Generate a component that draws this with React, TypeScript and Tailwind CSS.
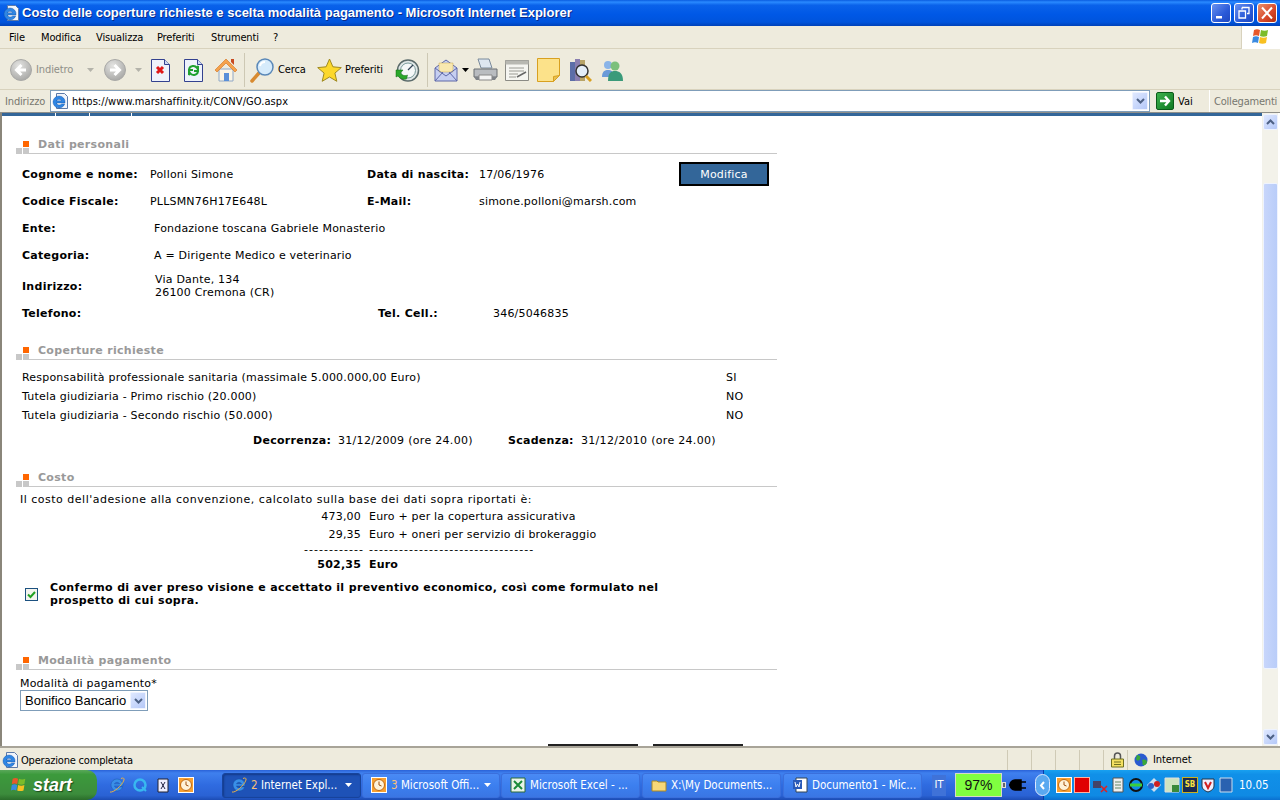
import React from "react";

const V = "[font-family:'DejaVu_Sans',Verdana,sans-serif]";
const T = "[font-family:'DejaVu_Sans_Condensed','Liberation_Sans',sans-serif]";

const E_PATH = "M8 2a6 6 0 1 0 5.700 7.900h-3.100a3 3 0 0 1-5.200-1h8.600A6 6 0 0 0 8 2zM5.400 6.800a3 3 0 0 1 5.200 0z";

function IE({ s = 16 }: { s?: number }) {
  return (
    <svg width={s} height={s} viewBox="0 0 16 16" className="shrink-0">
      <path d={E_PATH} fill="#3a8fe8" stroke="#154f9f" strokeWidth=".4" fillRule="evenodd" />
      <path d="M1 15C4 16 13 9 15 3c.5-2-1-2.500-3-1.500" fill="none" stroke="#e8b048" strokeWidth="1" />
    </svg>
  );
}
function IEPage() {
  return (
    <svg width="16" height="16" viewBox="0 0 16 16" className="shrink-0">
      <path d="M4.500.5h8l3 3v12h-11z" fill="#f2f5fb" stroke="#5d7aa8" />
      <g transform="translate(-1 1)">
        <path d={E_PATH} fill="#2f86e4" stroke="#154f9f" strokeWidth=".4" fillRule="evenodd" />
      </g>
    </svg>
  );
}
function Circle({ d = "M16 11H7m4.500-5-5 5 5 5" }: { d?: string }) {
  return (
    <svg width="22" height="22" viewBox="0 0 22 22" className="shrink-0">
      <defs>
        <radialGradient id="gc" cx=".4" cy=".3" r=".8">
          <stop offset="0" stopColor="#e4e4e2" />
          <stop offset="1" stopColor="#a2a2a0" />
        </radialGradient>
      </defs>
      <circle cx="11" cy="11" r="10.500" fill="url(#gc)" stroke="#a8a8a6" />
      <path d={d} fill="none" stroke="#fff" strokeWidth="3" />
    </svg>
  );
}
function SmallArrow({ c = "#b4b3aa" }: { c?: string }) {
  return (
    <svg width="7" height="4" viewBox="0 0 7 4" className="shrink-0">
      <path d="M0 0h7L3.500 4z" fill={c} />
    </svg>
  );
}
function Doc({ children }: { children: React.ReactNode }) {
  return (
    <svg width="19" height="23" viewBox="0 0 19 23" className="shrink-0">
      <path d="M.5.5h13l5 5v17H.500z" fill="#eef2fb" stroke="#33418f" />
      <path d="M13.500.5v5h5" fill="#cfd9f2" stroke="#33418f" />
      {children}
    </svg>
  );
}
function Home() {
  return (
    <svg width="24" height="24" viewBox="0 0 24 24" className="shrink-0">
      <path d="M5 11h14v12H5z" fill="#fbf4e4" stroke="#8fa8c8" />
      <path d="M10 15h5v8h-5z" fill="#5a8fd8" />
      <path d="M1 12 12 1l11 11-2 2L12 5 3 14z" fill="#f6a24a" stroke="#d0701e" strokeWidth=".6" />
      <path d="M17 1h3v6l-3-3z" fill="#c84a20" />
    </svg>
  );
}
function Search() {
  return (
    <svg width="25" height="25" viewBox="0 0 25 25" className="shrink-0">
      <path d="M2 23 9 15" stroke="#d88a30" strokeWidth="3.500" strokeLinecap="round" />
      <circle cx="15" cy="9" r="8" fill="#d6ebfb" stroke="#5a88b8" strokeWidth="1.500" />
      <path d="M10 8a5 5 0 0 1 5-4" stroke="#fff" strokeWidth="2" fill="none" />
    </svg>
  );
}
function Star() {
  return (
    <svg width="25" height="25" viewBox="0 0 25 25" className="shrink-0">
      <path d="m12.500 1 3.400 7.800 8.400.8-6.400 5.500 1.900 8.200-7.300-4.300-7.300 4.300 1.900-8.200L.7 9.600l8.400-.8z" fill="#fcd82c" stroke="#a08a20" />
    </svg>
  );
}
function History() {
  return (
    <svg width="25" height="25" viewBox="0 0 25 25" className="shrink-0">
      <circle cx="13" cy="12.500" r="10.500" fill="#dfe6e6" stroke="#5a6a6a" strokeWidth="1.500" />
      <circle cx="13" cy="12.500" r="7.500" fill="#f5f8f8" stroke="#7a9a9a" />
      <path d="M13 12 18 7" stroke="#345" strokeWidth="1.200" />
      <path d="M1 12h7l-2.500 3c2 3 5 3 7 2l-1 4c-4 1-7-1-8.500-3L1 19z" fill="#2aa82a" stroke="#126a12" strokeWidth=".5" />
    </svg>
  );
}
function Mail() {
  return (
    <svg width="24" height="24" viewBox="0 0 24 24" className="shrink-0">
      <path d="M1 10 12 2l11 8v13H1z" fill="#c6cff2" stroke="#5e68a8" />
      <path d="M5 5h14v9H5z" fill="#f8e8b0" stroke="#c8a850" strokeWidth=".5" />
      <path d="M1 10l11 8 11-8M1 23l8-9M23 23l-8-9" fill="none" stroke="#5e68a8" />
    </svg>
  );
}
function Printer() {
  return (
    <svg width="25" height="24" viewBox="0 0 25 24" className="shrink-0">
      <path d="M5 1h11l3 9H8z" fill="#dde6f0" stroke="#7a8a9a" />
      <path d="M1 11h23v8H1z" fill="#b9bcc0" stroke="#6a6e72" />
      <path d="M1 19h23l-2 3H3z" fill="#7f8388" />
      <path d="M6 17h13v5H6z" fill="#f4f4f4" stroke="#888" />
    </svg>
  );
}
function Edit() {
  return (
    <svg width="24" height="21" viewBox="0 0 24 21" className="shrink-0">
      <path d="M.5.5h23v20H.5z" fill="#f5f5f1" stroke="#8b8b85" />
      <path d="M.5.5h23v4H.5z" fill="#b8b8b2" />
      <path d="M4 8h15M4 11h15M4 14h9M4 17h7" stroke="#9a9a94" />
      <path d="m12 17 9-5" stroke="#666" strokeWidth="1.500" />
    </svg>
  );
}
function Note() {
  return (
    <svg width="23" height="24" viewBox="0 0 23 24" className="shrink-0">
      <path d="M.5.5h22v17l-6 6H.5z" fill="#fce28a" stroke="#d8a020" />
      <path d="m22.500 17.500-6 1v5z" fill="#e8c050" stroke="#d8a020" />
    </svg>
  );
}
function Research() {
  return (
    <svg width="23" height="24" viewBox="0 0 23 24" className="shrink-0">
      <path d="M1 4h5v19H1z" fill="#5c6ea8" />
      <path d="M6 1h5v22H6z" fill="#8a7fb0" />
      <path d="M11 2h5v21h-5z" fill="#b8a468" />
      <circle cx="13" cy="13" r="6" fill="#e4eef8" stroke="#333" strokeWidth="1.500" />
      <path d="m17 18 5 5" stroke="#d8a020" strokeWidth="3" />
    </svg>
  );
}
function Messenger({ s = 24 }: { s?: number }) {
  return (
    <svg width={s} height={s} viewBox="0 0 24 24" className="shrink-0">
      <circle cx="8" cy="7" r="4" fill="#8ab4e8" />
      <path d="M2 19c0-6 3-7 6-7s6 1 6 7z" fill="#6a9ad8" />
      <circle cx="15" cy="8" r="4.500" fill="#7cc07c" />
      <path d="M8 23c0-8 3-10 7-10s8 2 8 10z" fill="#3a9a7a" />
    </svg>
  );
}
function Flag({ s = 20 }: { s?: number }) {
  return (
    <svg width={s} height={s} viewBox="0 0 20 20" className="shrink-0">
      <path d="M3 3c2-1 4-1 6 0L8 9C6 8 4 8 2 9z" fill="#e8582a" />
      <path d="M10 3c2 1 5 1 7 0l-1 6c-2 1-5 1-7 0z" fill="#7cbc2a" />
      <path d="M2 10c2-1 4-1 6 0l-1 6c-2-1-4-1-6 0z" fill="#3a8ae0" />
      <path d="M9 10c2 1 5 1 7 0l-1 6c-2 1-5 1-7 0z" fill="#f8c020" />
    </svg>
  );
}
function WinBtn({ kind }: { kind: "min" | "max" | "close" }) {
  const bg =
    kind === "close"
      ? "bg-[linear-gradient(135deg,#e8906c,#d8482a_60%,#b03010)]"
      : "bg-[linear-gradient(135deg,#6a92f0,#2a5ad8_60%,#1f48c0)]";
  return (
    <div className={`w-[20px] h-[20px] rounded-[3px] border border-white flex items-center justify-center ${bg}`}>
      <svg width="14" height="14" viewBox="0 0 14 14">
        {kind === "min" && <path d="M2 10h6v2.500H2z" fill="#fff" />}
        {kind === "max" && <path d="M5 1.500h7v6h-2M5 1.500v2M2 5h6.500v7H2z" fill="none" stroke="#fff" strokeWidth="1.300" />}
        {kind === "close" && <path d="m2 1.500 10 11M12 1.500l-10 11" stroke="#fff" strokeWidth="2" />}
      </svg>
    </div>
  );
}
function ScrollBtn({ up }: { up: boolean }) {
  return (
    <div className="h-[16px] w-[15px] rounded-[2px] border border-[#eef3ff] bg-[linear-gradient(135deg,#dfe8ff,#b4c8f8)] flex items-center justify-center">
      <svg width="9" height="6" viewBox="0 0 9 6">
        <path d={up ? "m1 5 3.500-3.500L8 5" : "m1 1 3.500 3.500L8 1"} fill="none" stroke="#4d6185" strokeWidth="2" />
      </svg>
    </div>
  );
}
function DropBtn({ cls }: { cls: string }) {
  return (
    <div className={`${cls} rounded-[1px] border border-[#eef3ff] bg-[linear-gradient(135deg,#dfe8ff,#b4c8f8)] flex items-center justify-center`}>
      <svg width="9" height="6" viewBox="0 0 9 6">
        <path d="m1 1 3.500 3.500L8 1" fill="none" stroke="#4d6185" strokeWidth="2" />
      </svg>
    </div>
  );
}

function Section({ title }: { title: string }) {
  return (
    <div className="flex items-end w-[761px] ml-[14px] h-[14px]">
      <div className="w-[13px] grid grid-cols-2 gap-x-px gap-y-px shrink-0">
        <div className="w-[6px] h-[6px]" />
        <div className="w-[6px] h-[6px] bg-[#ff6600]" />
        <div className="w-[6px] h-[6px] bg-[#c8c8c8]" />
        <div className="w-[6px] h-[6px] bg-[#c8c8c8]" />
      </div>
      <div className="flex-1 h-[14px] border-b border-[#c8c8c8] pl-[9px] text-[11px] leading-[9px] font-bold text-[#999999] tracking-[.3px]">
        {title}
      </div>
    </div>
  );
}
const Bold = ({ w, children, cls = "" }: { w?: string; children: React.ReactNode; cls?: string }) => (
  <span className={`font-bold shrink-0 tracking-[.28px] ${w ?? ""} ${cls}`}>{children}</span>
);

function Row({ h, children }: { h: string; children: React.ReactNode }) {
  return <div className={`flex items-center ${h} pl-[20px]`}>{children}</div>;
}

function TBtn({ children, active, cls = "", arrow = true }: { children: React.ReactNode; active?: boolean; cls?: string; arrow?: boolean }) {
  return (
    <div
      className={`h-[25px] rounded-[3px] flex items-center px-[8px] gap-[4px] text-[11.500px] text-white shrink-0 whitespace-nowrap overflow-hidden ${
        active
          ? "bg-[#1e52b7] border border-[#17439c] shadow-[inset_1px_1px_2px_#143a88]"
          : "bg-[linear-gradient(180deg,#4a8af5,#3c7fef_50%,#3a76e4)] border border-[#3a6fdc]"
      } ${cls}`}
    >
      {children}
      {arrow && (
        <span className="ml-auto">
          <SmallArrow c="#fff" />
        </span>
      )}
    </div>
  );
}

function Clock({ s = 16 }: { s?: number }) {
  return (
    <svg width={s} height={s} viewBox="0 0 16 16" className="shrink-0">
      <rect x=".5" y=".5" width="15" height="15" fill="#f8a030" stroke="#fff" />
      <circle cx="8" cy="8" r="5.500" fill="#fff2d8" stroke="#c06810" />
      <path d="M8 4.500V8l2.500 1" fill="none" stroke="#a05010" />
    </svg>
  );
}

export default function App() {
  return (
    <div className={`w-[1280px] h-[800px] flex flex-col overflow-hidden bg-white text-black ${T}`}>
      {/* Title bar */}
      <div className="h-[26px] shrink-0 flex items-center pl-[3px] pr-[3px] bg-[linear-gradient(180deg,#0a5ce0,#2a8aff_8%,#0a62ea_20%,#0058e6_55%,#0054dc_85%,#0042b8)]">
        <IEPage />
        <span className="ml-[3px] text-white font-bold text-[13px] [text-shadow:1px_1px_0_#0a2a88] font-['Liberation_Sans',sans-serif]">
          Costo delle coperture richieste e scelta modalità pagamento - Microsoft Internet Explorer
        </span>
        <div className="ml-auto flex gap-[3px]">
          <WinBtn kind="min" />
          <WinBtn kind="max" />
          <WinBtn kind="close" />
        </div>
      </div>
      {/* Menu */}
      <div className="h-[23px] shrink-0 flex items-center pl-[9px] bg-[#eeebdd] border-b border-[#d8d2bd] text-[11px] tracking-[-.15px]">
        <span className="w-[32px] pt-[2px]">File</span>
        <span className="w-[55px] pt-[2px]">Modifica</span>
        <span className="w-[61px] pt-[2px]">Visualizza</span>
        <span className="w-[54px] pt-[2px]">Preferiti</span>
        <span className="w-[62px] pt-[2px]">Strumenti</span>
        <span className="pt-[2px]">?</span>
        <div className="ml-auto h-[23px] w-[39px] bg-white flex items-center justify-center border-l border-[#d8d2bd]">
          <Flag />
        </div>
      </div>
      {/* Toolbar */}
      <div className="h-[41px] shrink-0 flex items-center pl-[10px] pt-[2px] bg-[#eeebdd] border-b border-[#d8d2bd] text-[11px] tracking-[-.1px]">
        <Circle />
        <span className="ml-[4px] text-[#8f8f88] w-[48px]">Indietro</span>
        <span className="ml-[3px]"><SmallArrow /></span>
        <span className="ml-[10px]"><Circle d="M6 11h9m-4.500-5 5 5-5 5" /></span>
        <span className="ml-[9px]"><SmallArrow /></span>
        <span className="ml-[9px]">
          <Doc><path d="m6 8 6 6m0-6-6 6" stroke="#e01818" strokeWidth="3" /></Doc>
        </span>
        <span className="ml-[14px]">
          <Doc>
            <path d="M5 10a4.500 4.500 0 0 1 8-1l1-2v5h-4" fill="none" stroke="#20a030" strokeWidth="2" />
            <path d="M14 13a4.500 4.500 0 0 1-8 1l-1 2v-5h4" fill="none" stroke="#20a030" strokeWidth="2" />
          </Doc>
        </span>
        <span className="ml-[11px]"><Home /></span>
        <div className="ml-[6px] w-[1px] h-[34px] bg-[#cdc8b4]" />
        <span className="ml-[5px]"><Search /></span>
        <span className="ml-[3px] w-[39px]">Cerca</span>
        <Star />
        <span className="ml-[3px] w-[50px]">Preferiti</span>
        <History />
        <div className="ml-[7px] w-[1px] h-[34px] bg-[#cdc8b4]" />
        <span className="ml-[6px]"><Mail /></span>
        <span className="ml-[4px]"><SmallArrow c="#000" /></span>
        <span className="ml-[4px]"><Printer /></span>
        <span className="ml-[7px]"><Edit /></span>
        <span className="ml-[8px]"><Note /></span>
        <span className="ml-[9px]"><Research /></span>
        <span className="ml-[8px]"><Messenger /></span>
      </div>
      {/* Address bar */}
      <div className="h-[23px] shrink-0 flex items-center pl-[5px] bg-[#eeebdd] border-b border-[#8f8f8a] text-[11px]">
        <span className="w-[45px] text-[#77776f] tracking-[-.15px] pt-[2px]">Indirizzo</span>
        <div className="w-[1100px] h-[22px] flex items-center bg-white border border-[#7f9db9] pl-[1px] pr-[1px]">
          <IEPage />
          <span className="ml-[4px] tracking-[.08px] pt-[2px]">https://www.marshaffinity.it/CONV/GO.aspx</span>
          <DropBtn cls="ml-auto w-[16px] h-[18px]" />
        </div>
        <div className="ml-[6px] w-[18px] h-[18px] rounded-[2px] bg-[linear-gradient(135deg,#3cb04c,#0f7a22)] flex items-center justify-center border border-[#0a5a18]">
          <svg width="12" height="12" viewBox="0 0 12 12"><path d="M1 6h8M6 1.500 10 6l-4 4.500" fill="none" stroke="#fff" strokeWidth="2.400" /></svg>
        </div>
        <span className="ml-[4px] w-[31px] pt-[2px]">Vai</span>
        <div className="w-[1px] h-[22px] bg-[#fff]" />
        <span className="ml-[4px] text-[#77776f] tracking-[-.2px] pt-[2px]">Collegamenti</span>
      </div>
      {/* Main */}
      <div className="flex-1 min-h-0 flex border-l-[2px] border-l-[#8a867a] bg-white">
        <div className={`flex-1 min-w-0 overflow-hidden text-[11px] leading-[13px] tracking-[.2px] ${V}`}>
          <div className="h-[3px] flex bg-[#336699]">
            <div className="ml-[53px] w-px bg-white" />
            <div className="ml-[33px] w-px bg-white" />
            <div className="ml-[41px] w-px bg-white" />
          </div>
          <div className="pt-[24px]">
            <Section title="Dati personali" />
          </div>
          <div className="mt-[7px]" />
          <Row h="h-[27px]">
            <Bold w="w-[128px]">Cognome e nome:</Bold>
            <span className="w-[217px]">Polloni Simone</span>
            <Bold w="w-[112px]">Data di nascita:</Bold>
            <span className="w-[200px]">17/06/1976</span>
            <div className="w-[90px] h-[24px] mb-[1px] bg-[#336699] border-2 border-black text-white flex items-center justify-center">Modifica</div>
          </Row>
          <Row h="h-[27px]">
            <Bold w="w-[128px]">Codice Fiscale:</Bold>
            <span className="w-[217px]">PLLSMN76H17E648L</span>
            <Bold w="w-[112px]">E-Mail:</Bold>
            <span>simone.polloni@marsh.com</span>
          </Row>
          <Row h="h-[27px]">
            <Bold w="w-[132px]">Ente:</Bold>
            <span>Fondazione toscana Gabriele Monasterio</span>
          </Row>
          <Row h="h-[27px]">
            <Bold w="w-[132px]">Categoria:</Bold>
            <span>A = Dirigente Medico e veterinario</span>
          </Row>
          <Row h="h-[34px]">
            <Bold w="w-[133px]">Indirizzo:</Bold>
            <span>Via Dante, 134<br />26100 Cremona (CR)</span>
          </Row>
          <Row h="h-[20px]">
            <Bold w="w-[356px]">Telefono:</Bold>
            <Bold w="w-[115px]">Tel. Cell.:</Bold>
            <span>346/5046835</span>
          </Row>
          <div className="mt-[23px]"><Section title="Coperture richieste" /></div>
          <div className="mt-[8px]" />
          <Row h="h-[19px]"><span className="w-[704px]">Responsabilità professionale sanitaria (massimale 5.000.000,00 Euro)</span><span>SI</span></Row>
          <Row h="h-[19px]"><span className="w-[704px]">Tutela giudiziaria - Primo rischio (20.000)</span><span>NO</span></Row>
          <Row h="h-[19px]"><span className="w-[704px]">Tutela giudiziaria - Secondo rischio (50.000)</span><span>NO</span></Row>
          <div className="flex items-center h-[19px] mt-[6px] pl-[251px]">
            <Bold w="w-[85px]">Decorrenza:</Bold>
            <span className="w-[170px] tracking-[.3px]">31/12/2009 (ore 24.00)</span>
            <Bold w="w-[73px]">Scadenza:</Bold>
            <span className="tracking-[.3px]">31/12/2010 (ore 24.00)</span>
          </div>
          <div className="mt-[23px]"><Section title="Costo" /></div>
          <div className="mt-[4px] h-[16px] flex items-center pl-[18px] tracking-[.5px]">Il costo dell'adesione alla convenzione, calcolato sulla base dei dati sopra riportati è:</div>
          {[
            ["473,00", "Euro + per la copertura assicurativa", "h-[18px]"],
            ["29,35", "Euro + oneri per servizio di brokeraggio", "h-[18px]"],
            ["------------", "---------------------------------", "h-[12px] tracking-[1.040px]"],
            ["502,35", "Euro", "h-[18px] font-bold"],
          ].map(([a, b, h], i) => (
            <div key={i} className={`flex items-center ${h}`}>
              <span className={`${i === 2 ? "w-[362px]" : "w-[359px]"} text-right shrink-0`}>{a}</span>
              <span className={i === 2 ? "ml-[5px]" : "ml-[8px]"}>{b}</span>
            </div>
          ))}
          <div className="mt-[8px] flex items-center h-[26px] pl-[23px]">
            <div className="w-[13px] h-[13px] border border-[#1c5180] bg-[#f4f4ee] flex items-center justify-center shrink-0">
              <svg width="9" height="9" viewBox="0 0 9 9"><path d="m1 4.500 2.500 2.500L8 2" fill="none" stroke="#21a121" strokeWidth="2" /></svg>
            </div>
            <span className="ml-[12px] font-bold tracking-[.35px] w-[625px]">Confermo di aver preso visione e accettato il preventivo economico, così come formulato nel prospetto di cui sopra.</span>
          </div>
          <div className="mt-[49px]"><Section title="Modalità pagamento" /></div>
          <div className="mt-[6px] h-[14px] pl-[18px] flex items-center">Modalità di pagamento*</div>
          <div className="ml-[18px] w-[128px] h-[21px] border border-[#7f9db9] flex items-center pl-[4px] pr-px tracking-normal font-['Liberation_Sans',sans-serif]">
            <span className="text-[13px]">Bonifico Bancario</span>
            <DropBtn cls="ml-auto w-[16px] h-[17px]" />
          </div>
          <div className="mt-[33px] flex pl-[546px] gap-[15px]">
            <div className="w-[90px] h-[10px] border-2 border-[#222] bg-[#336699]" />
            <div className="w-[90px] h-[10px] border-2 border-[#222] bg-[#336699]" />
          </div>
        </div>
        {/* Scrollbar */}
        <div className="w-[16px] mr-[2px] bg-[#f3f2ea] flex flex-col items-center pt-px pb-px">
          <ScrollBtn up />
          <div className="mt-[53px] w-[15px] h-[486px] rounded-[2px] border border-[#eef3ff] bg-[linear-gradient(90deg,#c8d6fb,#b9cdf9)]" />
          <div className="mt-auto"><ScrollBtn up={false} /></div>
        </div>
      </div>
      {/* Status bar */}
      <div className="h-[24px] shrink-0 flex items-center pl-[2px] pt-[1px] bg-[#eeebdd] border-t-2 border-[#a8a498] text-[11px]">
        <IEPage />
        <span className="ml-[3px] w-[986px] tracking-[-.2px] pt-[3px]">Operazione completata</span>
        {[0, 1, 2, 3].map((i) => (
          <div key={i} className="w-[24px] h-[20px] border-l border-[#cfcab6]" />
        ))}
        <div className="w-[24px] h-[20px] border-l border-[#cfcab6] flex items-center justify-center pl-[3px]">
          <svg width="13" height="16" viewBox="0 0 13 16"><path d="M3.500 7V4a3 3 0 0 1 6 0v3" fill="none" stroke="#555" strokeWidth="1.500" /><path d="M.5 7h12v8H.5z" fill="#f4e060" stroke="#707020" /><path d="M3 10h7M3 12.500h7" stroke="#707020" /></svg>
        </div>
        <div className="h-[20px] border-l border-[#cfcab6] pl-[6px] flex items-center gap-[5px] tracking-[-.1px]">
          <svg width="14" height="14" viewBox="0 0 14 14"><circle cx="7" cy="7" r="6.500" fill="#2a5ad0" /><path d="M3 2c3 0 4 2 3 4S3 8 2 6zM8 7c3-1 5 0 5 2s-3 4-4 3 0-3-1-5z" fill="#3aa83a" /></svg>
          <span className="pt-[2px]">Internet</span>
        </div>
      </div>
      {/* Taskbar */}
      <div className="h-[30px] shrink-0 flex items-center bg-[linear-gradient(180deg,#2a62d8,#3f80ee_10%,#2f6be0_50%,#2a62d4_85%,#1c4cb4)] text-[11px] text-white">
        <div className="w-[97px] h-[30px] rounded-r-[10px] bg-[linear-gradient(180deg,#5aa85a,#3c9a3c_15%,#3c8c3c_80%,#2a6c2a)] flex items-center pl-[10px] gap-[5px] shrink-0">
          <Flag s={18} />
          <span className="font-['Liberation_Sans',sans-serif] italic font-bold text-[18px] [text-shadow:1px_1px_1px_#1a4a1a]">start</span>
        </div>
        <div className="ml-[12px] flex items-center w-[113px] gap-[7px] shrink-0">
          <IE />
          <svg width="16" height="16" viewBox="0 0 16 16"><circle cx="8" cy="8" r="5.500" fill="none" stroke="#38b8f0" strokeWidth="2.500" /><path d="m10 10 4 4" stroke="#38b8f0" strokeWidth="2" /></svg>
          <svg width="16" height="16" viewBox="0 0 16 16"><path d="M3 2h10v13H3z" fill="#eef" stroke="#223" /><path d="M6 5l4 7m0-7-4 7" stroke="#224" /></svg>
          <Clock />
        </div>
        <TBtn active cls="w-[139px]"><IE /><span className="pt-[2px]"><b className="text-[#f8c078] font-normal">2</b> Internet Expl...</span></TBtn>
        <TBtn cls="w-[138px] ml-px"><Clock /><span className="pt-[2px]"><b className="text-[#f8c078] font-normal">3</b> Microsoft Offi...</span></TBtn>
        <TBtn cls="w-[139px] ml-px" arrow={false}>
          <svg width="16" height="16" viewBox="0 0 16 16" className="shrink-0"><path d="M1 1h14v14H1z" fill="#e8f4e8" stroke="#2a6a3a" /><path d="m4 4 8 8m0-8-8 8" stroke="#1a8a3a" strokeWidth="2" /></svg>
          <span className="pt-[2px]">Microsoft Excel - ...</span>
        </TBtn>
        <TBtn cls="w-[139px] ml-[2px]" arrow={false}>
          <svg width="16" height="16" viewBox="0 0 16 16" className="shrink-0"><path d="M1 4h5l1 1h8v9H1z" fill="#f8d878" stroke="#a88828" /></svg>
          <span className="pt-[2px]">X:\My Documents...</span>
        </TBtn>
        <TBtn cls="w-[139px] ml-[2px]" arrow={false}>
          <svg width="16" height="16" viewBox="0 0 16 16" className="shrink-0"><path d="M4 1h11v14H4z" fill="#fff" stroke="#345" /><path d="M1 3h9v9H1z" fill="#2a5ab8" /><path d="m3 5 1 5 1.500-3L7 10l1-5" fill="none" stroke="#fff" /></svg>
          <span className="pt-[2px]">Documento1 - Mic...</span>
        </TBtn>
        <div className="ml-[10px] w-[14px] h-[21px] bg-[#3f72d8] flex items-center justify-center text-[11px] shrink-0">IT</div>
        <div className="ml-[9px] w-[47px] h-[24px] bg-[#80ff40] border border-[#d8d8c8] text-[#111] text-[14px] font-['Liberation_Sans',sans-serif] flex items-center justify-center shrink-0">97%</div>
        <div className="w-[4px] h-[6px] border border-[#ddd] bg-[#666] shrink-0" />
        <svg width="18" height="12" viewBox="0 0 18 12" className="ml-[3px] shrink-0"><path d="M6 1h6v10H6a5 5 0 0 1 0-10zM12 3h5M12 9h5M0 6h2" stroke="#000" strokeWidth="1.500" fill="#000" /></svg>
        <div className="ml-[8px] w-[15px] h-[22px] rounded-full bg-[#5aa8f0] border border-[#dce8ff] flex items-center justify-center shrink-0 relative z-10">
          <svg width="7" height="9" viewBox="0 0 7 9"><path d="M5 1 2 4.500 5 8" fill="none" stroke="#fff" strokeWidth="2" /></svg>
        </div>
        <div className="-ml-[7px] flex-1 min-w-0 overflow-hidden h-[30px] flex items-center pl-[12px] gap-[2px] border-l border-[#0a3ca8] bg-[linear-gradient(180deg,#18a0f0,#1090e8_15%,#0f8ae4_85%,#0a70d0)]">
          <Clock />
          <div className="w-[16px] h-[16px] bg-[#e00000] border border-[#ffb0a0] shrink-0" />
          <svg width="16" height="16" viewBox="0 0 16 16" className="shrink-0"><path d="M1 4h8v7H1z" fill="#446" /><path d="M9 9l6 6m0-6-6 6" stroke="#e02020" strokeWidth="1.500" /></svg>
          <svg width="16" height="16" viewBox="0 0 16 16" className="shrink-0"><path d="M3 1h10v14H3z" fill="#eee" stroke="#555" /><path d="M5 5h6M5 8h6M5 11h6" stroke="#686" /></svg>
          <svg width="16" height="16" viewBox="0 0 16 16" className="shrink-0"><circle cx="8" cy="8" r="6" fill="none" stroke="#111" strokeWidth="2" /><path d="M2 8h12" stroke="#3ad03a" strokeWidth="3" /></svg>
          <svg width="16" height="16" viewBox="0 0 16 16" className="shrink-0"><path d="M8 1 15 8l-7 7-7-7z" fill="#cde" /><circle cx="11" cy="7" r="3" fill="#d02020" /><circle cx="5" cy="9" r="3" fill="#2a62c8" /></svg>
          <svg width="16" height="16" viewBox="0 0 16 16" className="shrink-0"><path d="M1 1h14v14H1z" fill="#cfe4c0" stroke="#ddd" /><path d="M8 8h7v7H8z" fill="#3a8a3a" /></svg>
          <div className="w-[16px] h-[16px] bg-[#1a2a50] border border-[#c8b020] text-[#f8e040] text-[8px] font-bold flex items-center justify-center shrink-0">SB</div>
          <svg width="16" height="16" viewBox="0 0 16 16" className="shrink-0"><path d="M2 2h12v7c0 3-3 5-6 6-3-1-6-3-6-6z" fill="#eef" stroke="#234" /><path d="m5 5 3 6 3-6" fill="none" stroke="#d02020" strokeWidth="2" /></svg>
          <svg width="16" height="16" viewBox="0 0 16 16" className="shrink-0"><path d="M2 1h12v14H2z" fill="#2a62b0" stroke="#cde" /></svg>
          <span className="ml-[3px] text-[11.500px] shrink-0 pt-[2px]">10.05</span>
        </div>
      </div>
    </div>
  );
}
